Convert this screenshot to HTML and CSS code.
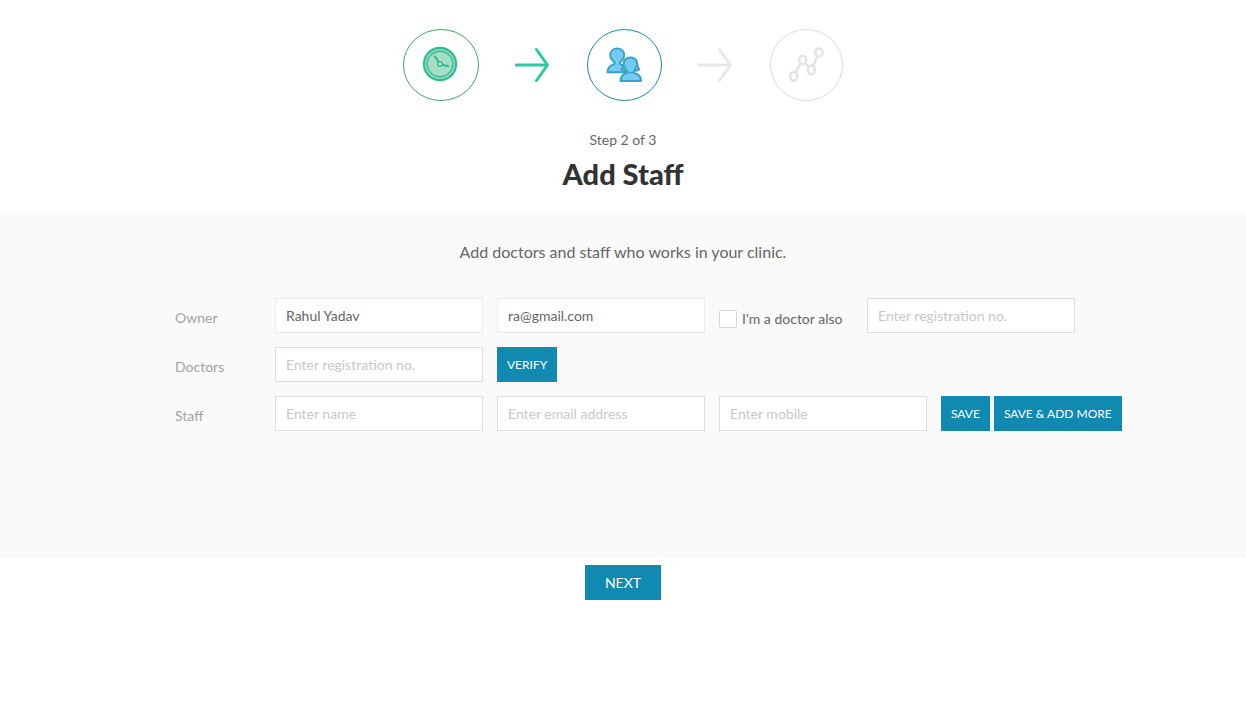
FILE: index.html
```html
<!DOCTYPE html>
<html lang="en">
<head>
<meta charset="utf-8">
<title>Add Staff</title>
<link rel="stylesheet" href="styles.css">
</head>
<body>
<header class="intro">
  <div class="steps">
    <svg class="step" width="76" height="72" viewBox="0 0 76 72" aria-hidden="true">
      <ellipse cx="38" cy="36" rx="37.5" ry="35.5" fill="#fff" stroke="#3da75c"/>
      <circle cx="37" cy="35" r="16" fill="#a8dcc5" stroke="#32bd94" stroke-width="2.4"/>
      <circle cx="37" cy="35" r="12.8" fill="none" stroke="#32bd94" stroke-width="1.4"/>
      <path d="M32 27.5l5 7.5 8 2.2" fill="none" stroke="#32bd94" stroke-width="2.2" stroke-linecap="round"/>
      <circle cx="37" cy="35" r="2.1" fill="#e4f6ee" stroke="#32bd94" stroke-width="1.5"/>
    </svg>
    <svg class="arrow arrow-done" width="36" height="36" viewBox="0 0 36 36" aria-hidden="true">
      <path d="M1 18H32.500M21.500 2.500L32.500 18 21.500 33.500"/>
    </svg>
    <svg class="step" width="75" height="72" viewBox="0 0 75 72" aria-hidden="true">
      <ellipse cx="37.5" cy="36" rx="37" ry="35.5" fill="#fff" stroke="#1588b3"/>
      <g fill="#73cbf1" stroke="#3ba0c8" stroke-width="2" stroke-linejoin="round">
        <path d="M20.500 43.200c0-4.500 1.800-6.700 7-8.200v-1.800c-2.700-1.800-4.300-4.400-4.300-7.400 0-4 3.200-6.300 7-6.300s7 2.300 7 6.300c0 3-1.600 5.600-4.300 7.400V35c5.200 1.500 7 3.700 7 8.200z"/>
        <path d="M33.600 52c0-4.600 1.900-6.900 6-8v-2.500c-2 .5-3.700.1-5-1.300 1.500-1.500 1.700-3 1.900-4.900.4-4.200 3-6.700 6.900-6.700s6.500 2.500 6.900 6.700c.2 1.900.4 3.400 1.900 4.900-1.300 1.400-3 1.800-5 1.300V44c4.900 1.100 6.800 3.400 6.800 8z"/>
        <path d="M39.600 41.500c-1.400-1.500-1.800-3.200-1.600-5M47.200 41.500c1.400-1.500 1.800-3.200 1.600-5M40 42.500c2 1.800 5 1.800 7 0" fill="none" stroke-width="1.500"/>
      </g>
    </svg>
    <svg class="arrow" width="36" height="36" viewBox="0 0 36 36" aria-hidden="true">
      <path d="M1 18H32.500M21.500 2.500L32.500 18 21.500 33.500"/>
    </svg>
    <svg class="step" width="73" height="72" viewBox="0 0 73 72" aria-hidden="true">
      <ellipse cx="36.5" cy="36" rx="36" ry="35.5" fill="#fff" stroke="#dcdcdc"/>
      <g fill="#fff" stroke="#e2e4e4" stroke-width="2.5">
        <path d="M25.5 43.5L31 34M35 34l4 4M43 37.5l4.500-10.500" fill="none"/>
        <ellipse cx="23.7" cy="47.3" rx="3.500" ry="4.400"/>
        <ellipse cx="32.7" cy="31" rx="3.500" ry="4.200"/>
        <ellipse cx="41.3" cy="41" rx="3.500" ry="4.200"/>
        <ellipse cx="49" cy="23.5" rx="3.500" ry="4.200"/>
      </g>
    </svg>
  </div>
  <p class="count">Step 2 of 3</p>
  <h1 class="title">Add Staff</h1>
</header>
<form id="staff-form">
  <main class="panel">
    <p class="lead">Add doctors and staff who works in your clinic.</p>
    <div class="rows">
      <div class="row">
        <label class="label" for="owner">Owner</label>
        <input class="field field-fixed" id="owner" type="text" value="Rahul Yadav" readonly>
        <input class="field field-fixed" type="email" value="ra@gmail.com" aria-label="Owner email" readonly>
        <label class="check"><input class="box" type="checkbox">I'm a doctor also</label>
        <input class="field" type="text" placeholder="Enter registration no." aria-label="Owner registration number">
      </div>
      <div class="row">
        <label class="label" for="doctor">Doctors</label>
        <input class="field" id="doctor" type="text" placeholder="Enter registration no.">
        <button class="button" type="button">VERIFY</button>
      </div>
      <div class="row">
        <label class="label" for="staff">Staff</label>
        <input class="field" id="staff" type="text" placeholder="Enter name">
        <input class="field" type="email" placeholder="Enter email address" aria-label="Staff email">
        <input class="field" type="tel" placeholder="Enter mobile" aria-label="Staff mobile">
        <div class="actions">
          <button class="button" type="button">SAVE</button>
          <button class="button" type="button">SAVE &amp; ADD MORE</button>
        </div>
      </div>
    </div>
  </main>
  <footer class="footer">
    <button class="button button-next" type="submit">NEXT</button>
  </footer>
</form>
</body>
</html>
```
FILE: styles.css
```css
* { box-sizing: border-box; }
body {
  margin: 0;
  background: #fff;
  color: #666;
  font: 14px/20px Lato, "Liberation Sans", sans-serif;
}
.intro {
  padding: 29px 16px 20px;
  text-align: center;
}
.steps {
  display: flex;
  justify-content: center;
  align-items: center;
  gap: 36px;
}
.arrow {
  fill: none;
  stroke: #e8e8e8;
  stroke-width: 3;
  stroke-linecap: round;
  stroke-linejoin: round;
}
.arrow-done { stroke: #2bcca1; }
.count { margin: 29px 0 4px; }
.title {
  margin: 0;
  color: #333;
  font-size: 29px;
  line-height: 39px;
  font-weight: 900;
}
.panel {
  min-height: 345px;
  padding: 27px 0;
  background: #fafafa;
}
.lead {
  margin: 0 0 34px;
  font-size: 16px;
  line-height: 24px;
  text-align: center;
}
.rows {
  display: flex;
  flex-direction: column;
  gap: 14px;
  max-width: 1008px;
  margin: 0 auto;
  padding-left: 56px;
}
.row {
  display: flex;
  flex-wrap: wrap;
  gap: 14px;
}
.label {
  width: 86px;
  padding-top: 10px;
  color: #a3a3a3;
}
.field {
  width: 208px;
  height: 35px;
  padding: 0 10px;
  border: 1px solid #ddd;
  border-radius: 0;
  background: #fff;
  color: #666;
  font: inherit;
}
.field-fixed { border-style: dotted; }
.field::placeholder { color: #c8c8c8; opacity: 1; }
.check {
  display: flex;
  align-items: center;
  gap: 5px;
  width: 134px;
  padding-top: 7px;
  white-space: nowrap;
}
.box {
  appearance: none;
  width: 18px;
  height: 18px;
  margin: 0;
  border: 1px solid #d5d5d5;
  border-radius: 2px;
  background: #fff;
}
.box:checked { background: #118ab2; }
.actions { display: flex; gap: 4px; }
.button {
  height: 35px;
  padding: 0 10px;
  border: 0;
  background: #118ab2;
  color: #fff;
  font: inherit;
  font-size: 12px;
  cursor: pointer;
}
.footer {
  padding: 7px 0;
  text-align: center;
}
.button-next {
  padding: 0 20px;
  font-size: 14px;
}
```
